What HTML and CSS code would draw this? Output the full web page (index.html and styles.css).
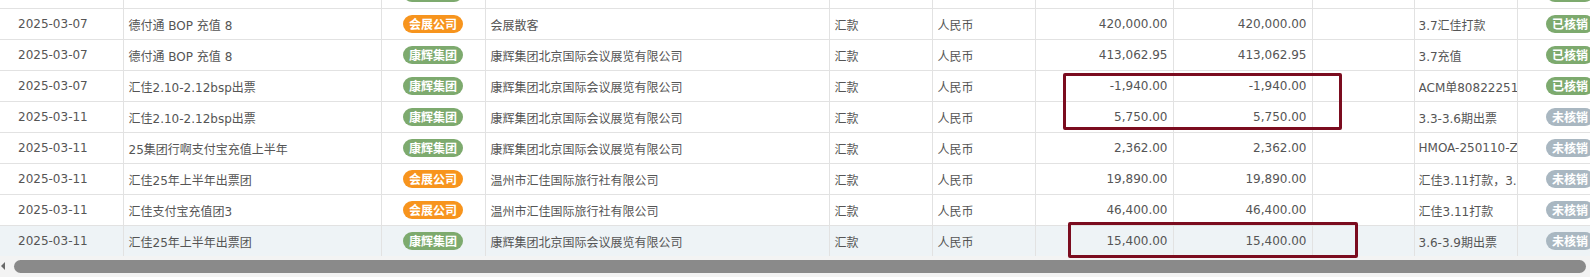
FILE: index.html
```html
<!DOCTYPE html>
<html lang="zh-CN">
<head>
<meta charset="utf-8">
<title>账务列表</title>
<link rel="stylesheet" href="styles.css">
</head>
<body>
<div class="grid-wrap">
  <div class="viewport">
    <table class="grid">
      <colgroup>
        <col class="c-date"><col class="c-title"><col class="c-org"><col class="c-cust"><col class="c-type"><col class="c-cur"><col class="c-amt"><col class="c-amt2"><col class="c-empty"><col class="c-note"><col class="c-status">
      </colgroup>
      <tbody>
        <tr class="scrolled-off">
          <td class="date"></td><td></td><td class="center"><span class="tag green wide"></span></td><td></td><td></td><td></td><td class="num"></td><td class="num"></td><td></td><td class="note"></td><td class="status"><span class="tag green short"></span></td>
        </tr>
        <tr>
          <td class="date">2025-03-07</td><td>德付通 BOP 充值 8</td><td class="center"><span class="tag orange">会展公司</span></td><td>会展散客</td><td>汇款</td><td>人民币</td><td class="num">420,000.00</td><td class="num">420,000.00</td><td></td><td class="note"><div class="clip">3.7汇佳打款</div></td><td class="status"><span class="tag green">已核销</span></td>
        </tr>
        <tr>
          <td class="date">2025-03-07</td><td>德付通 BOP 充值 8</td><td class="center"><span class="tag green">康辉集团</span></td><td>康辉集团北京国际会议展览有限公司</td><td>汇款</td><td>人民币</td><td class="num">413,062.95</td><td class="num">413,062.95</td><td></td><td class="note"><div class="clip">3.7充值</div></td><td class="status"><span class="tag green">已核销</span></td>
        </tr>
        <tr>
          <td class="date">2025-03-07</td><td>汇佳2.10-2.12bsp出票</td><td class="center"><span class="tag green">康辉集团</span></td><td>康辉集团北京国际会议展览有限公司</td><td>汇款</td><td>人民币</td><td class="num">-1,940.00</td><td class="num">-1,940.00</td><td></td><td class="note"><div class="clip">ACM单8082225103</div></td><td class="status"><span class="tag green">已核销</span></td>
        </tr>
        <tr>
          <td class="date">2025-03-11</td><td>汇佳2.10-2.12bsp出票</td><td class="center"><span class="tag green">康辉集团</span></td><td>康辉集团北京国际会议展览有限公司</td><td>汇款</td><td>人民币</td><td class="num">5,750.00</td><td class="num">5,750.00</td><td></td><td class="note"><div class="clip">3.3-3.6期出票</div></td><td class="status"><span class="tag gray">未核销</span></td>
        </tr>
        <tr>
          <td class="date">2025-03-11</td><td>25集团行啊支付宝充值上半年</td><td class="center"><span class="tag green">康辉集团</span></td><td>康辉集团北京国际会议展览有限公司</td><td>汇款</td><td>人民币</td><td class="num">2,362.00</td><td class="num">2,362.00</td><td></td><td class="note"><div class="clip">HMOA-250110-ZF</div></td><td class="status"><span class="tag gray">未核销</span></td>
        </tr>
        <tr>
          <td class="date">2025-03-11</td><td>汇佳25年上半年出票团</td><td class="center"><span class="tag orange">会展公司</span></td><td>温州市汇佳国际旅行社有限公司</td><td>汇款</td><td>人民币</td><td class="num">19,890.00</td><td class="num">19,890.00</td><td></td><td class="note"><div class="clip">汇佳3.11打款，3.10出票</div></td><td class="status"><span class="tag gray">未核销</span></td>
        </tr>
        <tr>
          <td class="date">2025-03-11</td><td>汇佳支付宝充值团3</td><td class="center"><span class="tag orange">会展公司</span></td><td>温州市汇佳国际旅行社有限公司</td><td>汇款</td><td>人民币</td><td class="num">46,400.00</td><td class="num">46,400.00</td><td></td><td class="note"><div class="clip">汇佳3.11打款</div></td><td class="status"><span class="tag gray">未核销</span></td>
        </tr>
        <tr class="hover">
          <td class="date">2025-03-11</td><td>汇佳25年上半年出票团</td><td class="center"><span class="tag green">康辉集团</span></td><td>康辉集团北京国际会议展览有限公司</td><td>汇款</td><td>人民币</td><td class="num">15,400.00</td><td class="num">15,400.00</td><td></td><td class="note"><div class="clip">3.6-3.9期出票</div></td><td class="status"><span class="tag gray">未核销</span></td>
        </tr>
      </tbody>
    </table>
  </div>
  <div class="hscroll">
    <span class="arrow-left"></span>
    <div class="thumb"></div>
  </div>
  <div class="mark mark-1"></div>
  <div class="mark mark-2"></div>
</div>
</body>
</html>
```

FILE: styles.css
```css
html, body {
  margin: 0;
  padding: 0;
  background: #ffffff;
}

body {
  font-family: "DejaVu Sans", Verdana, "Noto Sans CJK SC", sans-serif;
  font-size: 12px;
  color: #555555;
}

.grid-wrap {
  position: relative;
  width: 1590px;
  height: 277px;
  overflow: hidden;
}

.viewport {
  height: 256px;
  overflow: hidden;
}

.grid {
  border-collapse: collapse;
  table-layout: fixed;
  width: 1623px;
  margin-top: -23px;
}

.c-date { width: 123px; }
.c-title { width: 258px; }
.c-org { width: 104px; }
.c-cust { width: 344px; }
.c-type { width: 103px; }
.c-cur { width: 103px; }
.c-amt { width: 138px; }
.c-amt2 { width: 139px; }
.c-empty { width: 102px; }
.c-note { width: 103px; }
.c-status { width: 106px; }

.grid tr {
  height: 31px;
}

.grid td {
  padding: 0 4px 0 5px;
  border: 1px solid #e2e2e2;
  white-space: nowrap;
  overflow: hidden;
  vertical-align: middle;
}

.grid td:first-child {
  border-left: none;
}

.grid td.date {
  padding-left: 18px;
}

.grid td.note {
  padding: 0 0 0 4px;
}

.grid td.center,
.grid td.status {
  text-align: center;
  padding: 0;
}

.grid td.num {
  text-align: right;
  padding-right: 5px;
}

.grid tr.hover td {
  background: #eef3f6;
}

.clip {
  overflow: hidden;
  white-space: nowrap;
  text-overflow: clip;
}

.tag {
  display: inline-block;
  height: 18px;
  line-height: 18px;
  padding: 0 6px;
  border-radius: 9px;
  color: #ffffff;
  font-family: "Noto Sans CJK SC", sans-serif;
  font-size: 12px;
  font-weight: bold;
  text-align: center;
  vertical-align: middle;
}

.tag.wide { width: 48px; }
.tag.short { width: 36px; }

.tag.green { background: #7daa6e; }
.tag.orange { background: #f7941d; }
.tag.gray { background: #a9b7c1; }

.hscroll {
  position: relative;
  height: 21px;
  background: #f3f3f3;
  display: flex;
  align-items: flex-start;
  padding-top: 4px;
  box-sizing: border-box;
}

.arrow-left {
  width: 0;
  height: 0;
  margin: 2px 0 0 1px;
  border-top: 4px solid transparent;
  border-bottom: 4px solid transparent;
  border-right: 4px solid #6a6a6a;
}

.thumb {
  margin-left: 9px;
  width: 1572px;
  height: 13px;
  border-radius: 7px;
  background: #8a8a8a;
}

.mark {
  position: absolute;
  border: 3px solid #7b0c1f;
  border-radius: 2px;
  box-sizing: border-box;
  pointer-events: none;
}

.mark-1 {
  left: 1063px;
  top: 73px;
  width: 279px;
  height: 57px;
}

.mark-2 {
  left: 1068px;
  top: 222px;
  width: 290px;
  height: 36px;
}
```
